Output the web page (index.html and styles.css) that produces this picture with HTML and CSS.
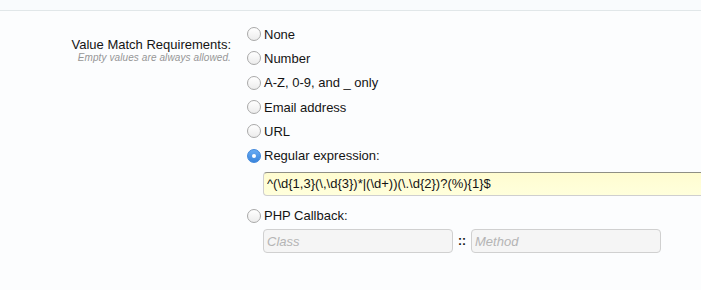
FILE: index.html
```html
<!DOCTYPE html>
<html lang="en">
<head>
    <meta charset="UTF-8">
    <title>Value Match Requirements</title>
    <link rel="stylesheet" href="styles.css">
</head>
<body>
    <div class="prev-row"></div>
    <dl class="ctrl-unit">
        <dt>
            <label>Value Match Requirements:</label>
            <span class="hint">Empty values are always allowed.</span>
        </dt>
        <dd>
            <ul class="options">
                <li><label><input type="radio" name="match_type"> None</label></li>
                <li><label><input type="radio" name="match_type"> Number</label></li>
                <li><label><input type="radio" name="match_type"> A-Z, 0-9, and _ only</label></li>
                <li><label><input type="radio" name="match_type"> Email address</label></li>
                <li><label><input type="radio" name="match_type"> URL</label></li>
                <li class="with-input">
                    <label><input type="radio" name="match_type" checked> Regular expression:</label>
                    <input type="text" class="textbox regex" value="^(\d{1,3}(\,\d{3})*|(\d+))(\.\d{2})?(%){1}$">
                </li>
                <li class="with-input">
                    <label><input type="radio" name="match_type"> PHP Callback:</label>
                    <div class="callback">
                        <input type="text" class="textbox disabled" placeholder="Class" disabled>
                        <span class="sep">::</span>
                        <input type="text" class="textbox disabled" placeholder="Method" disabled>
                    </div>
                </li>
            </ul>
        </dd>
    </dl>
</body>
</html>
```

FILE: styles.css
```css
body {
    margin: 0;
    padding: 0;
    background-color: #fcfdfe;
    font-family: "Liberation Sans", Arial, sans-serif;
    font-size: 13px;
    color: #141414;
    overflow: hidden;
}
.prev-row {
    height: 10px;
    border-bottom: 1px solid #e1e7e9;
    background-color: #f9fbfd;
}
.ctrl-unit {
    display: flex;
    margin: 0;
}
.ctrl-unit dt {
    width: 231px;
    flex-shrink: 0;
    text-align: right;
    padding-top: 26px;
}
.ctrl-unit dt label {
    display: block;
    line-height: 16px;
}
.ctrl-unit dt .hint {
    display: block;
    font-size: 10px;
    font-style: italic;
    color: #969696;
    line-height: 12px;
    letter-spacing: 0.1px;
    margin-top: -1px;
}
.ctrl-unit dd {
    margin: 0 0 0 16px;
    padding-top: 11px;
    flex: 1;
}
.options {
    list-style: none;
    margin: 0;
    padding: 0;
}
.options li {
    min-height: 24.3px;
}
.options li > label {
    display: flex;
    align-items: center;
    height: 24.3px;
}
.options input[type="radio"] {
    appearance: none;
    -webkit-appearance: none;
    width: 14px;
    height: 14px;
    margin: 0 3px 0 0;
    border: 1px solid #a9a9a9;
    border-radius: 50%;
    background: linear-gradient(#ffffff, #ececec);
    box-sizing: border-box;
    position: relative;
}
.options input[type="radio"]:checked {
    border-color: #3f87dc;
    background: linear-gradient(#68abf3, #3a85dc);
}
.options input[type="radio"]:checked::after {
    content: "";
    position: absolute;
    left: 4px;
    top: 4px;
    width: 4px;
    height: 4px;
    border-radius: 50%;
    background-color: white;
}
.textbox {
    display: block;
    box-sizing: border-box;
    height: 24px;
    border: 1px solid #c8c8c8;
    border-radius: 4px;
    padding: 2px 3px;
    font-family: "Liberation Sans", Arial, sans-serif;
    font-size: 13px;
    color: #141414;
    outline: none;
}
.regex {
    width: 460px;
    margin: 4px 0 8px 16px;
    border-color: #cfcfcf;
    border-top-color: #8f8f85;
    background: linear-gradient(#fffcd0, #ffffdc);
    border-radius: 4px 0 0 4px;
}
.callback {
    display: flex;
    align-items: center;
    margin: 1px 0 0 16px;
}
.disabled {
    width: 190px;
    background-color: #f5f5f5;
    border-color: #d0d0d0;
}
.disabled::placeholder {
    color: #b4b4b4;
    font-style: italic;
}
.sep {
    width: 18px;
    text-align: center;
    font-weight: bold;
    font-size: 12px;
}
```
